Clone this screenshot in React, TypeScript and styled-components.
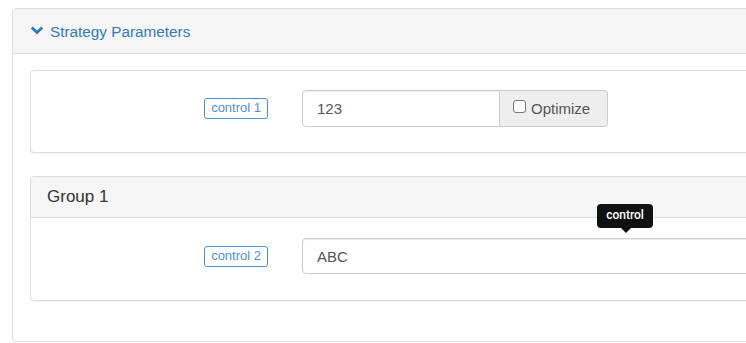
import React from "react";
import styled, { createGlobalStyle } from "styled-components";

const GlobalStyle = createGlobalStyle`
  html, body {
    margin: 0;
    padding: 0;
    background: #fff;
    overflow: hidden;
  }
  body {
    font-family: "Liberation Sans", Arial, sans-serif;
    font-size: 14px;
    color: #333;
  }
  * {
    box-sizing: border-box;
  }
`;

interface Field {
  label: string;
  value: string;
  optimize?: boolean;
  tooltip?: string;
}

const App = () => {
  const first: Field = { label: "control 1", value: "123", optimize: true };
  const second: Field = { label: "control 2", value: "ABC", tooltip: "control" };

  return (
    <Page>
      <GlobalStyle />
      <Panel>
        <Heading>
          <Chevron viewBox="0 0 14 10">
            <path d="M0.8 2.4 L2.8 0.5 L7 4.6 L11.2 0.5 L13.2 2.4 L7 8.6 Z" fill="#337ab7" />
          </Chevron>
          <HeadingTitle>Strategy Parameters</HeadingTitle>
        </Heading>
        <OuterBody>
          <InnerPanel>
            <InnerBody>
              <FieldRow field={first} />
            </InnerBody>
          </InnerPanel>
          <InnerPanel>
            <GroupHeading>Group 1</GroupHeading>
            <InnerBody $group>
              <FieldRow field={second} />
            </InnerBody>
          </InnerPanel>
        </OuterBody>
      </Panel>
    </Page>
  );
};

const FieldRow = ({ field }: { field: Field }) => {
  return (
    <Row>
      <LabelCol>
        <Badge>{field.label}</Badge>
      </LabelCol>
      <InputGroup $short={!!field.optimize}>
        <Input defaultValue={field.value} $joined={!!field.optimize} />
        {field.optimize && (
          <Addon>
            <Check />
            Optimize
          </Addon>
        )}
        {field.tooltip && (
          <Tooltip>
            {field.tooltip}
            <Arrow />
          </Tooltip>
        )}
      </InputGroup>
    </Row>
  );
};

export default App;

const Page = styled.div`
  padding: 8px 0 0 12px;
  width: 1000px;
`;

const Panel = styled.div`
  width: 900px;
  border: 1px solid #ddd;
  border-radius: 4px;
  background: #fff;
  box-shadow: 0 1px 1px rgba(0, 0, 0, 0.05);
  height: 334px;
`;

const Heading = styled.div`
  height: 45px;
  display: flex;
  align-items: center;
  padding: 0 0 0 17px;
  background: #f5f5f5;
  border-bottom: 1px solid #ddd;
  border-radius: 3px 3px 0 0;
`;

const Chevron = styled.svg`
  width: 14px;
  height: 10px;
  margin: 0 6px 0 0;
`;

const HeadingTitle = styled.span`
  font-size: 15.3px;
  color: #337ab7;
  margin-top: 1px;
`;

const OuterBody = styled.div`
  padding: 16px 0 0 17px;
  display: flex;
  flex-direction: column;
  gap: 23px;
`;

const InnerPanel = styled.div`
  width: 860px;
  border: 1px solid #ddd;
  border-radius: 4px;
  background: #fff;
  box-shadow: 0 1px 1px rgba(0, 0, 0, 0.05);
`;

const GroupHeading = styled.div`
  height: 41px;
  display: flex;
  align-items: center;
  padding: 0 16px;
  font-size: 17px;
  color: #333;
  background: #f5f5f5;
  border-bottom: 1px solid #ddd;
  border-radius: 3px 3px 0 0;
`;

const InnerBody = styled.div<{ $group?: boolean }>`
  padding: ${(p) => (p.$group ? "20px 0 26px 0" : "19px 0 25px 0")};
`;

const Row = styled.div`
  display: flex;
  align-items: center;
`;

const LabelCol = styled.div`
  width: 237px;
  display: flex;
  justify-content: flex-end;
`;

const Badge = styled.span`
  display: inline-block;
  padding: 2px 6px 3px;
  font-size: 13px;
  line-height: 14px;
  color: #4a90d9;
  border: 1px solid #4a90d9;
  border-radius: 3px;
`;

const InputGroup = styled.div<{ $short: boolean }>`
  position: relative;
  margin-left: 34px;
  display: flex;
  width: ${(p) => (p.$short ? "306px" : "520px")};
`;

const Input = styled.input<{ $joined: boolean }>`
  flex: 1;
  min-width: 0;
  height: ${(p) => (p.$joined ? "37px" : "36px")};
  padding: 0 14px;
  font-family: "Liberation Sans", Arial, sans-serif;
  font-size: 15px;
  color: #555;
  border: 1px solid #ccc;
  border-radius: ${(p) => (p.$joined ? "4px 0 0 4px" : "4px")};
  box-shadow: inset 0 1px 1px rgba(0, 0, 0, 0.075);
  outline: none;
`;

const Addon = styled.span`
  width: 108px;
  display: flex;
  align-items: center;
  padding: 0 0 0 13px;
  font-size: 15px;
  color: #555;
  background: #eee;
  border: 1px solid #ccc;
  border-left: none;
  border-radius: 0 4px 4px 0;
`;

const Check = styled.span`
  width: 13px;
  height: 13px;
  margin: -4px 5px 0 0;
  border: 1px solid #767676;
  border-radius: 3px;
  background: #fff;
`;

const Tooltip = styled.div`
  position: absolute;
  left: 295px;
  top: -34px;
  width: 56px;
  height: 24px;
  display: flex;
  align-items: center;
  justify-content: center;
  font-family: Roboto, "Liberation Sans", Arial, sans-serif;
  font-size: 12px;
  font-weight: 500;
  color: #fff;
  background: #111;
  border-radius: 4px;
  padding-bottom: 2px;
`;

const Arrow = styled.span`
  position: absolute;
  left: 24px;
  bottom: -5px;
  width: 0;
  height: 0;
  border-left: 5px solid transparent;
  border-right: 5px solid transparent;
  border-top: 5px solid #111;
`;
